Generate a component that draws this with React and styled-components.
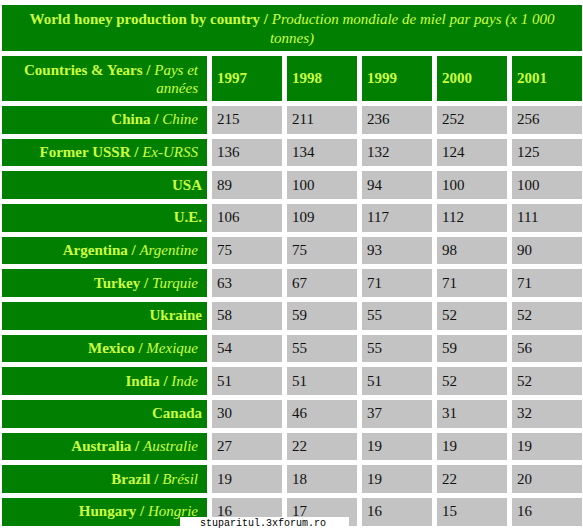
import React from "react";
import styled, { createGlobalStyle } from "styled-components";

const GlobalStyle = createGlobalStyle`
  html, body {
    margin: 0;
    padding: 0;
    background: #ffffff;
  }
  body {
    font-family: "Liberation Serif", "Times New Roman", serif;
  }
`;

const years = ["1997", "1998", "1999", "2000", "2001"];

const rows = [
  { en: "China", fr: "Chine", values: [215, 211, 236, 252, 256] },
  { en: "Former USSR", fr: "Ex-URSS", values: [136, 134, 132, 124, 125] },
  { en: "USA", values: [89, 100, 94, 100, 100] },
  { en: "U.E.", values: [106, 109, 117, 112, 111] },
  { en: "Argentina", fr: "Argentine", values: [75, 75, 93, 98, 90] },
  { en: "Turkey", fr: "Turquie", values: [63, 67, 71, 71, 71] },
  { en: "Ukraine", values: [58, 59, 55, 52, 52] },
  { en: "Mexico", fr: "Mexique", values: [54, 55, 55, 59, 56] },
  { en: "India", fr: "Inde", values: [51, 51, 51, 52, 52] },
  { en: "Canada", values: [30, 46, 37, 31, 32] },
  { en: "Australia", fr: "Australie", values: [27, 22, 19, 19, 19] },
  { en: "Brazil", fr: "Brésil", values: [19, 18, 19, 22, 20] },
  { en: "Hungary", fr: "Hongrie", values: [16, 17, 16, 15, 16] },
];

export default function App() {
  return (
    <>
      <GlobalStyle />
      <Page>
        <Table>
          <Title>
            <span>
              World honey production by country / <Fr>Production mondiale de miel par pays (x 1 000</Fr>
              <br />
              <Fr>tonnes)</Fr>
            </span>
          </Title>
          <HeadLabel>
            <span>
              Countries &amp; Years / <Fr>Pays et</Fr>
              <br />
              <Fr>années</Fr>
            </span>
          </HeadLabel>
          {years.map((y) => (
            <YearCell key={y}>{y}</YearCell>
          ))}
          {rows.map((r) => (
            <React.Fragment key={r.en}>
              <Country>
                <span>
                  {r.en}
                  {r.fr && (
                    <>
                      {" / "}
                      <Fr $trail>{r.fr}</Fr>
                    </>
                  )}
                </span>
              </Country>
              {r.values.map((v, i) => (
                <Value key={i}>{v}</Value>
              ))}
            </React.Fragment>
          ))}
        </Table>
        <Watermark>stuparitul.3xforum.ro</Watermark>
      </Page>
    </>
  );
}

const Page = styled.div`
  position: relative;
  width: 583px;
  height: 531px;
  overflow: hidden;
  padding: 5px 0 0 2px;
  box-sizing: border-box;
`;

const Table = styled.div`
  display: grid;
  grid-template-columns: 205px repeat(5, 70px);
  grid-template-rows: 46px 45px repeat(13, 27.67px);
  gap: 5px 5px;
  color: #ccff40;
  font-size: 15px;
`;

const GreenCell = styled.div`
  background: #007f00;
  display: flex;
  align-items: center;
  font-weight: bold;
  box-sizing: border-box;
`;

const Title = styled(GreenCell)`
  grid-column: 1 / -1;
  justify-content: center;
  text-align: center;
  font-size: 15px;
  line-height: 19px;
  padding-top: 2px;
`;

const HeadLabel = styled(GreenCell)`
  justify-content: flex-end;
  text-align: right;
  padding-right: 9px;
  line-height: 18px;
  font-size: 15px;
`;

const YearCell = styled(GreenCell)`
  padding-left: 5px;
  font-size: 15px;
`;

const Country = styled(GreenCell)`
  justify-content: flex-end;
  padding-right: 5px;
  font-size: 15px;
  white-space: nowrap;
`;

const Fr = styled.i`
  font-weight: normal;
  font-style: italic;
  margin-right: ${(p) => (p.$trail ? "4px" : "0")};
`;

const Value = styled.div`
  background: #c3c3c3;
  color: #111111;
  display: flex;
  align-items: center;
  padding-left: 5px;
  font-size: 15px;
`;

const Watermark = styled.div`
  position: absolute;
  left: 180px;
  top: 517px;
  width: 169px;
  height: 14px;
  background: #ffffff;
  color: #000000;
  font-family: "Liberation Mono", "Courier New", monospace;
  font-size: 10px;
  line-height: 14px;
  padding-left: 20px;
  box-sizing: border-box;
`;
